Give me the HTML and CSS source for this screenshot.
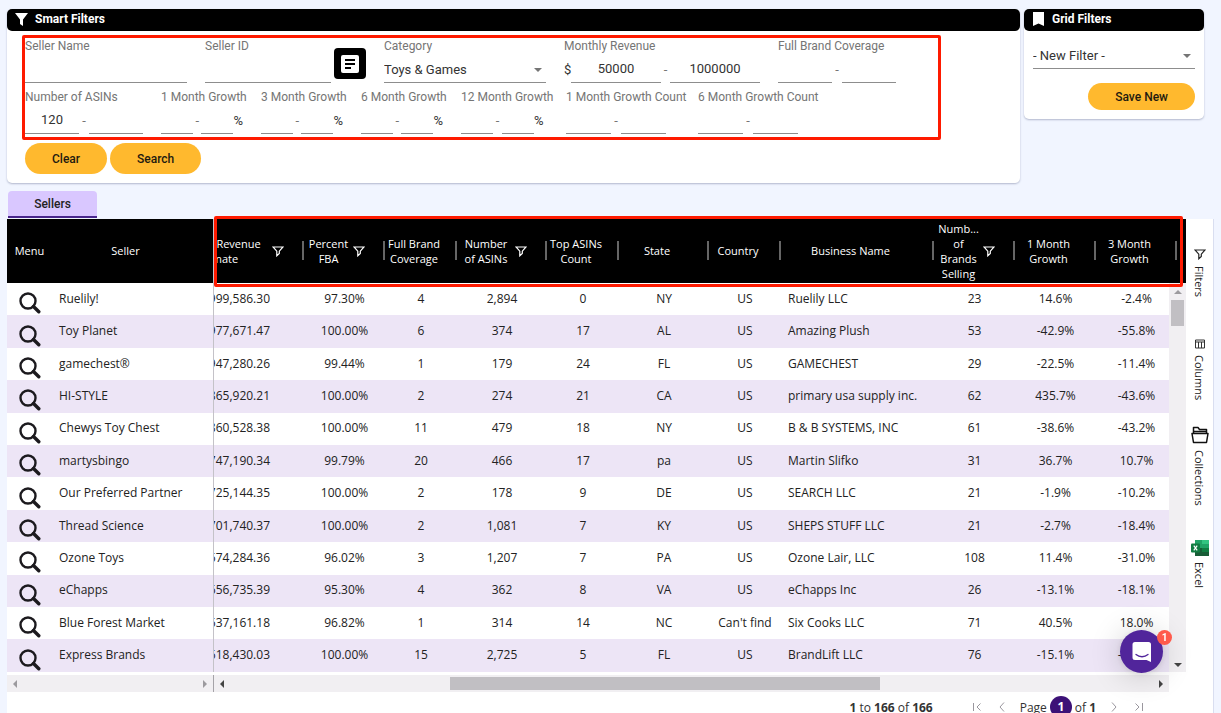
FILE: index.html
```html
<!DOCTYPE html>
<html lang="en">
<head>
    <meta charset="UTF-8">
    <meta name="viewport" content="width=device-width, initial-scale=1.0">
    <title>Sellers</title>
    <link rel="stylesheet" href="styles.css">
</head>
<body>
    <svg class="defs" aria-hidden="true">
        <symbol id="search" viewBox="0 0 22 22"><circle cx="9" cy="9" r="7.5" fill="none" stroke="#1c1a1e" stroke-width="2.4"/><path d="M14.500 14.500l5.300 5.300" stroke="#1c1a1e" stroke-width="3.400" stroke-linecap="round"/></symbol>
        <symbol id="funnel" viewBox="0 0 12 12"><path d="M1 2h10L7.300 6.200v2.300L4.800 10.800V6.200z" fill="none" stroke="currentColor" stroke-width="1.200"/></symbol>
    </svg>

    <div class="top">
        <section class="panel smart">
            <h2>
                <svg width="13" height="13" viewBox="0 0 13 13"><path d="M0 0h13L8 6.500V13L5 11V6.500z" fill="#fff"/></svg>
                Smart Filters
            </h2>
            <form id="smartForm">
                <div class="fields">
                    <div class="field-row">
                        <div class="field">
                            <label for="sellerName">Seller Name</label>
                            <div class="inputs"><input class="w-full" type="text" id="sellerName"></div>
                        </div>
                        <div class="with-button">
                            <div class="field">
                                <label for="sellerId">Seller ID</label>
                                <div class="inputs"><input class="w-id" type="text" id="sellerId"></div>
                            </div>
                            <button type="button" class="list-btn" aria-label="Seller list">
                                <svg width="18" height="18" viewBox="0 0 18 18"><rect width="18" height="18" rx="2" fill="#fff"/><path d="M4 5h10M4 9h10M4 13h6" stroke="#000" stroke-width="2"/></svg>
                            </button>
                        </div>
                        <div class="field">
                            <label for="category">Category</label>
                            <div class="inputs select w-full">
                                <select id="category"><option>Toys &amp; Games</option></select>
                            </div>
                        </div>
                        <div class="field revenue">
                            <label for="revMin">Monthly Revenue</label>
                            <div class="inputs">
                                <span class="dollar">$</span><input class="w-rev" type="text" id="revMin" value="50000"><span class="dash">-</span><input class="w-rev" type="text" aria-label="Maximum monthly revenue" value="1000000">
                            </div>
                        </div>
                        <div class="field">
                            <label for="coverMin">Full Brand Coverage</label>
                            <div class="inputs"><input class="w-num" type="text" id="coverMin"><span class="dash">-</span><input class="w-num" type="text" aria-label="Maximum coverage"></div>
                        </div>
                    </div>
                    <div class="field-row">
                        <div class="field">
                            <label for="asinMin">Number of ASINs</label>
                            <div class="inputs"><input class="w-num" type="text" id="asinMin" value="120"><span class="dash">-</span><input class="w-num" type="text" aria-label="Maximum ASINs"></div>
                        </div>
                        <div class="field growth">
                            <label for="g1">1 Month Growth</label>
                            <div class="inputs"><input class="w-pct" type="text" id="g1"><span class="dash">-</span><input class="w-pct" type="text" aria-label="Maximum 1 month growth"><span>%</span></div>
                        </div>
                        <div class="field growth">
                            <label for="g3">3 Month Growth</label>
                            <div class="inputs"><input class="w-pct" type="text" id="g3"><span class="dash">-</span><input class="w-pct" type="text" aria-label="Maximum 3 month growth"><span>%</span></div>
                        </div>
                        <div class="field growth">
                            <label for="g6">6 Month Growth</label>
                            <div class="inputs"><input class="w-pct" type="text" id="g6"><span class="dash">-</span><input class="w-pct" type="text" aria-label="Maximum 6 month growth"><span>%</span></div>
                        </div>
                        <div class="field growth-wide">
                            <label for="g12">12 Month Growth</label>
                            <div class="inputs"><input class="w-pct" type="text" id="g12"><span class="dash">-</span><input class="w-pct" type="text" aria-label="Maximum 12 month growth"><span>%</span></div>
                        </div>
                        <div class="field count">
                            <label for="c1">1 Month Growth Count</label>
                            <div class="inputs"><input class="w-count" type="text" id="c1"><span class="dash">-</span><input class="w-count" type="text" aria-label="Maximum 1 month growth count"></div>
                        </div>
                        <div class="field count">
                            <label for="c6">6 Month Growth Count</label>
                            <div class="inputs"><input class="w-count" type="text" id="c6"><span class="dash">-</span><input class="w-count" type="text" aria-label="Maximum 6 month growth count"></div>
                        </div>
                    </div>
                </div>
                <div class="actions">
                    <button type="reset" class="btn">Clear</button>
                    <button type="button" class="btn">Search</button>
                </div>
            </form>
        </section>

        <section class="panel saved">
            <h2>
                <svg width="13" height="14" viewBox="0 0 13 14"><path d="M1 0h11v14l-5.500-2.500L1 14z" fill="#fff"/></svg>
                Grid Filters
            </h2>
            <div class="saved-body">
                <div class="select">
                    <select aria-label="Saved filter"><option>- New Filter -</option></select>
                </div>
                <button type="button" class="btn save">Save New</button>
            </div>
        </section>
    </div>

    <button type="button" class="tab">Sellers</button>

    <div class="grid">
        <div class="grid-main">
            <div class="tables">
                <table class="pinned">
                    <colgroup><col class="c-menu"><col></colgroup>
                    <thead>
                        <tr><th>Menu</th><th class="th-seller">Seller</th></tr>
                    </thead>
                    <tbody>
                        <tr><td><svg><use href="#search"/></svg></td><td>Ruelily!</td></tr>
                        <tr><td><svg><use href="#search"/></svg></td><td>Toy Planet</td></tr>
                        <tr><td><svg><use href="#search"/></svg></td><td>gamechest®</td></tr>
                        <tr><td><svg><use href="#search"/></svg></td><td>HI-STYLE</td></tr>
                        <tr><td><svg><use href="#search"/></svg></td><td>Chewys Toy Chest</td></tr>
                        <tr><td><svg><use href="#search"/></svg></td><td>martysbingo</td></tr>
                        <tr><td><svg><use href="#search"/></svg></td><td>Our Preferred Partner</td></tr>
                        <tr><td><svg><use href="#search"/></svg></td><td>Thread Science</td></tr>
                        <tr><td><svg><use href="#search"/></svg></td><td>Ozone Toys</td></tr>
                        <tr><td><svg><use href="#search"/></svg></td><td>eChapps</td></tr>
                        <tr><td><svg><use href="#search"/></svg></td><td>Blue Forest Market</td></tr>
                        <tr><td><svg><use href="#search"/></svg></td><td>Express Brands</td></tr>
                    </tbody>
                </table>
                <div class="viewport">
                    <table class="center">
                        <colgroup>
                            <col class="c144"><col class="c81"><col class="c72"><col class="c90"><col class="c72"><col class="c90"><col class="c72"><col class="c153"><col class="c81"><col class="c81"><col class="c81">
                        </colgroup>
                        <thead>
                            <tr>
                                <th><div class="head filtered"><span>Monthly Revenue<br>Estimate</span><svg><use href="#funnel"/></svg></div></th>
                                <th><div class="head filtered"><span>Percent<br>FBA</span><svg><use href="#funnel"/></svg></div></th>
                                <th><div class="head"><span>Full Brand<br>Coverage</span></div></th>
                                <th><div class="head filtered"><span>Number<br>of ASINs</span><svg><use href="#funnel"/></svg></div></th>
                                <th><div class="head"><span>Top ASINs<br>Count</span></div></th>
                                <th><div class="head"><span>State</span></div></th>
                                <th><div class="head"><span>Country</span></div></th>
                                <th><div class="head"><span>Business Name</span></div></th>
                                <th><div class="head filtered"><span>Numb...<br>of<br>Brands<br>Selling</span><svg><use href="#funnel"/></svg></div></th>
                                <th><div class="head"><span>1 Month<br>Growth</span></div></th>
                                <th><div class="head"><span>3 Month<br>Growth</span></div></th>
                            </tr>
                        </thead>
                        <tbody>
                            <tr><td>$999,586.30</td><td>97.30%</td><td>4</td><td>2,894</td><td>0</td><td>NY</td><td>US</td><td>Ruelily LLC</td><td>23</td><td>14.6%</td><td>-2.4%</td></tr>
                            <tr><td>$977,671.47</td><td>100.00%</td><td>6</td><td>374</td><td>17</td><td>AL</td><td>US</td><td>Amazing Plush</td><td>53</td><td>-42.9%</td><td>-55.8%</td></tr>
                            <tr><td>$947,280.26</td><td>99.44%</td><td>1</td><td>179</td><td>24</td><td>FL</td><td>US</td><td>GAMECHEST</td><td>29</td><td>-22.5%</td><td>-11.4%</td></tr>
                            <tr><td>$865,920.21</td><td>100.00%</td><td>2</td><td>274</td><td>21</td><td>CA</td><td>US</td><td>primary usa supply inc.</td><td>62</td><td>435.7%</td><td>-43.6%</td></tr>
                            <tr><td>$860,528.38</td><td>100.00%</td><td>11</td><td>479</td><td>18</td><td>NY</td><td>US</td><td>B &amp; B SYSTEMS, INC</td><td>61</td><td>-38.6%</td><td>-43.2%</td></tr>
                            <tr><td>$747,190.34</td><td>99.79%</td><td>20</td><td>466</td><td>17</td><td>pa</td><td>US</td><td>Martin Slifko</td><td>31</td><td>36.7%</td><td>10.7%</td></tr>
                            <tr><td>$725,144.35</td><td>100.00%</td><td>2</td><td>178</td><td>9</td><td>DE</td><td>US</td><td>SEARCH LLC</td><td>21</td><td>-1.9%</td><td>-10.2%</td></tr>
                            <tr><td>$701,740.37</td><td>100.00%</td><td>2</td><td>1,081</td><td>7</td><td>KY</td><td>US</td><td>SHEPS STUFF LLC</td><td>21</td><td>-2.7%</td><td>-18.4%</td></tr>
                            <tr><td>$674,284.36</td><td>96.02%</td><td>3</td><td>1,207</td><td>7</td><td>PA</td><td>US</td><td>Ozone Lair, LLC</td><td>108</td><td>11.4%</td><td>-31.0%</td></tr>
                            <tr><td>$656,735.39</td><td>95.30%</td><td>4</td><td>362</td><td>8</td><td>VA</td><td>US</td><td>eChapps Inc</td><td>26</td><td>-13.1%</td><td>-18.1%</td></tr>
                            <tr><td>$637,161.18</td><td>96.82%</td><td>1</td><td>314</td><td>14</td><td>NC</td><td>Can't find</td><td>Six Cooks LLC</td><td>71</td><td>40.5%</td><td>18.0%</td></tr>
                            <tr><td>$618,430.03</td><td>100.00%</td><td>15</td><td>2,725</td><td>5</td><td>FL</td><td>US</td><td>BrandLift LLC</td><td>76</td><td>-15.1%</td><td>-14.2%</td></tr>
                        </tbody>
                    </table>
                    <div class="vscroll"><i class="arrow up"></i><i class="vthumb"></i><i class="arrow down"></i></div>
                </div>
                <div class="highlight"></div>
            </div>
            <div class="hscroll">
                <div class="track left"><i class="arrow prev"></i><i class="arrow next"></i></div>
                <div class="track right"><i class="arrow prev"></i><span class="rail"><i class="hthumb"></i></span><i class="arrow next"></i></div>
            </div>
            <div class="paging">
                <span class="summary"><b>1</b> to <b>166</b> of <b>166</b></span>
                <button type="button" aria-label="First page"><svg width="10" height="10" viewBox="0 0 10 10"><path d="M1.500 1v8M8.500 1.500L5 5l3.500 3.500"/></svg></button>
                <button type="button" aria-label="Previous page"><svg width="10" height="10" viewBox="0 0 10 10"><path d="M7 .5L3 5l4 4.500"/></svg></button>
                <span class="page">Page <b class="current">1</b> of <b>1</b></span>
                <button type="button" aria-label="Next page"><svg width="10" height="10" viewBox="0 0 10 10"><path d="M3 .5L7 5 3 9.500"/></svg></button>
                <button type="button" aria-label="Last page"><svg width="10" height="10" viewBox="0 0 10 10"><path d="M8.500 1v8M1.500 1.500L5 5 1.500 8.500"/></svg></button>
            </div>
        </div>

        <aside class="sidebar">
            <button type="button" class="s-filters"><svg width="12" height="12"><use href="#funnel"/></svg>Filters</button>
            <button type="button" class="s-columns"><svg width="10" height="10" viewBox="0 0 10 10"><path d="M.5 1h9v8h-9zM.5 3h9M3.500 3v6M6.500 3v6" fill="none" stroke="#333"/></svg>Columns</button>
            <button type="button" class="s-collections"><svg width="18" height="18" viewBox="0 0 18 18"><path d="M2.500 7V1.500h4.500l1.500 2h7V7M3 5.500h12M1 7.500h16l-1.500 9h-13z" fill="none" stroke="#111" stroke-width="1.500" stroke-linejoin="round"/></svg>Collections</button>
            <button type="button" class="s-excel"><svg width="18" height="16" viewBox="0 0 18 16"><path d="M4 0h7v8H4z" fill="#21a366"/><path d="M11 0h7v4h-7z" fill="#33c481"/><path d="M11 4h7v4h-7z" fill="#21a366"/><path d="M4 8h7v8H4z" fill="#185c37"/><path d="M11 8h7v4h-7z" fill="#107c41"/><path d="M11 12h7v4h-7z" fill="#185c37"/><rect y="3.500" width="9" height="9" rx="1" fill="#107c41"/><path d="M2.800 5.700l3.400 4.600M6.200 5.700L2.800 10.300" stroke="#fff" stroke-width="1.200"/></svg>Excel</button>
        </aside>
    </div>

    <button type="button" class="chat" aria-label="Open chat">
        <svg width="20" height="22" viewBox="0 0 20 22"><path d="M3 1h13.500a2.500 2.500 0 0 1 2.500 2.500V21l-4.500-2H3a2.500 2.500 0 0 1-2.500-2.500v-13A2.500 2.500 0 0 1 3 1z" fill="#fff"/><path d="M4 13.500c3.500 3 8.500 3 12 0" fill="none" stroke="#51259b" stroke-width="1.300" stroke-linecap="round"/></svg>
        <span class="badge">1</span>
    </button>
</body>
</html>
```
FILE: styles.css
```css
* {
    box-sizing: border-box;
}
html {
    height: 100%;
    overflow: hidden;
}
body {
    margin: 0;
    padding: 9px 7px 0 7px;
    background: #f1f5ff;
    font-family: Roboto, sans-serif;
    font-size: 12px;
    color: #222;
}
button, input, select {
    font: inherit;
    color: inherit;
}
button {
    border: none;
    padding: 0;
    background: none;
    cursor: pointer;
}
.defs {
    position: absolute;
    width: 0;
    height: 0;
}

/* filter panels */
.top {
    display: flex;
    align-items: flex-start;
    gap: 4px;
    margin-right: 10px;
}
.panel {
    background: #fff;
    border-radius: 5px;
    box-shadow: 0 1px 2px rgba(60, 70, 110, 0.35);
}
.panel h2 {
    display: flex;
    align-items: center;
    gap: 7px;
    height: 22px;
    margin: 0;
    padding: 0 8px 2px;
    border-radius: 5px;
    background: #000;
    color: #fff;
    font-size: 12px;
    font-weight: 700;
}
.smart {
    flex: 1;
}
.saved {
    width: 180px;
}
.fields {
    margin: 4px 79px 0 15px;
    border: 3px solid #fe1a00;
    border-radius: 2px;
    height: 105px;
}
.field-row {
    display: flex;
    gap: 18px;
    height: 51px;
}
.field label {
    display: block;
    height: 18px;
    line-height: 16px;
    color: #757575;
    white-space: nowrap;
}
.inputs {
    display: flex;
    height: 27px;
    line-height: 28px;
    font-size: 13px;
    color: #333;
}
.field input, .select select {
    flex: none;
    height: 27px;
    padding: 0;
    border: none;
    border-bottom: 1px solid #8d8d8d;
    border-radius: 0;
    outline: none;
    background: none;
    text-align: center;
}
.w-full {
    width: 162px;
}
.w-id {
    width: 126px;
}
.w-rev {
    width: 90px;
}
.w-num {
    width: 54px;
}
.w-pct {
    width: 32px;
}
.w-count {
    width: 45px;
}
.growth {
    width: 82px;
}
.growth-wide {
    width: 87px;
}
.count {
    width: 114px;
}
.dollar {
    width: 7px;
}
.dash {
    width: 10px;
    text-align: center;
    color: #757575;
}
.growth .dash, .growth-wide .dash, .revenue .dash {
    width: 9px;
}
.with-button {
    display: flex;
    gap: 3px;
}
.list-btn {
    display: flex;
    align-items: center;
    justify-content: center;
    width: 32px;
    height: 31px;
    margin-top: 10px;
    border-radius: 4px;
    background: #000;
}
.select {
    position: relative;
    font-size: 13px;
    color: #333;
}
.select select {
    width: 100%;
    appearance: none;
    text-align: left;
}
.select::after {
    content: "";
    position: absolute;
    right: 4px;
    top: 12px;
    border: 4px solid transparent;
    border-top-color: #757575;
    border-bottom: none;
}
.actions {
    display: flex;
    gap: 3px;
    padding: 3px 18px 9px;
}
.btn {
    height: 31px;
    padding: 0 27px;
    border-radius: 16px;
    background: #ffb92e;
    color: #1f1b10;
    font-weight: 500;
}
.saved-body {
    padding: 11px 9px 9px;
    text-align: right;
}
.save {
    height: 27px;
    margin-top: 14px;
}

/* seller grid */
.tab {
    display: block;
    width: 89px;
    height: 27px;
    margin: 8px 0 1px 1px;
    border-bottom: 2px solid #48258c;
    border-radius: 4px 4px 0 0;
    background: #d9c7ff;
    font-weight: 500;
}
.grid {
    display: flex;
    background: #fff;
    border-right: 1px solid #d9def0;
    font-family: "Open Sans", "Noto Sans", sans-serif;
}
.grid-main {
    flex: 1;
    min-width: 0;
}
.tables {
    display: flex;
    position: relative;
}
table {
    height: 453px;
    border-spacing: 0;
    table-layout: fixed;
}
thead tr {
    height: 64px;
}
th {
    padding: 0 0 1px;
    background: #000;
    color: #fff;
    font-size: 11px;
    font-weight: 400;
    line-height: 15px;
}
td {
    padding: 0 0 2px;
    text-align: center;
    white-space: nowrap;
}
tbody tr:nth-child(even) {
    background: #ede5f6;
}
.pinned {
    width: 207px;
    border-right: 1px solid #c4c2c8;
}
.pinned td {
    padding-left: 7px;
    text-align: left;
}
.pinned td:first-child {
    padding: 8px 0 0 12px;
}
.pinned td svg {
    display: block;
    width: 22px;
    height: 22px;
}
.pinned .th-seller {
    padding-right: 14px;
}
.viewport {
    flex: 1;
    min-width: 0;
    overflow: hidden;
    position: relative;
    background: linear-gradient(#000 64px, #fff 64px);
}
.center {
    width: 1017px;
    margin-left: -54px;
}
.c-menu {
    width: 45px;
}
.c72 {
    width: 72px;
}
.c81 {
    width: 81px;
}
.c90 {
    width: 90px;
}
.c144 {
    width: 144px;
}
.c153 {
    width: 153px;
}
.center td:first-child {
    padding-right: 34px;
    text-align: right;
}
.center td:nth-child(8) {
    padding-left: 7px;
    text-align: left;
}
.head {
    display: flex;
    align-items: center;
    height: 63px;
    padding-right: 14px;
    background: linear-gradient(#666, #666) right center / 2px 19px no-repeat;
}
.head span {
    flex: 1;
    white-space: nowrap;
}
.filtered {
    padding-right: 20px;
}
.filtered svg {
    flex: none;
    width: 12px;
    height: 12px;
}
.vscroll {
    display: flex;
    flex-direction: column;
    align-items: center;
    position: absolute;
    top: 64px;
    right: 0;
    bottom: 0;
    width: 17px;
    padding: 7px 0 5px;
    background: #f1eff2;
}
.vthumb {
    width: 13px;
    height: 26px;
    margin: 6px 0 auto;
    background: #c1bfc3;
}
.highlight {
    position: absolute;
    top: -3px;
    right: 3px;
    bottom: 385px;
    left: 207px;
    border: 3px solid #fe1a00;
    border-radius: 2px;
}
.hscroll {
    display: flex;
    padding: 3px 17px 0 0;
}
.track {
    display: flex;
    align-items: center;
    justify-content: space-between;
    height: 17px;
    padding: 0 6px;
    background: #f1eff2;
}
.left {
    width: 207px;
    border-right: 1px solid #a5a3a8;
}
.right {
    flex: 1;
}
.rail {
    flex: 1;
    padding: 0 4px 0 24%;
}
.hthumb {
    display: block;
    width: 61%;
    height: 13px;
    background: #c1bfc3;
}
.arrow {
    border: 4px solid transparent;
}
.up {
    border-top: none;
    border-bottom-color: #9c9a9e;
}
.down {
    border-bottom: none;
    border-top-color: #444;
}
.prev {
    border-left: none;
    border-right-color: #444;
}
.next {
    border-right: none;
    border-left-color: #444;
}
.left .prev {
    border-right-color: #9c9a9e;
}
.left .next {
    border-left-color: #9c9a9e;
}
.paging {
    display: flex;
    align-items: center;
    justify-content: flex-end;
    gap: 15px;
    height: 30px;
    padding-right: 42px;
    color: #333;
}
.summary {
    margin-right: 24px;
}
.paging button {
    display: flex;
}
.paging path {
    fill: none;
    stroke: #9a979e;
}
.page {
    display: flex;
    align-items: center;
    gap: 3px;
    margin: 0 -2px;
}
.current {
    width: 22px;
    height: 22px;
    border-radius: 50%;
    background: #3c1177;
    color: #fff;
    line-height: 22px;
    text-align: center;
}
.sidebar {
    width: 27px;
    padding-top: 29px;
}
.sidebar button {
    display: flex;
    align-items: center;
    gap: 6px;
    width: 27px;
    writing-mode: vertical-rl;
    font-size: 11px;
}
.s-filters {
    height: 91px;
}
.s-columns {
    height: 87px;
}
.s-collections {
    height: 114px;
}

/* chat launcher */
.chat {
    display: flex;
    align-items: center;
    justify-content: center;
    position: fixed;
    right: 58px;
    bottom: 40px;
    width: 43px;
    height: 43px;
    border-radius: 50%;
    background: #51259b;
    box-shadow: 0 1px 6px rgba(0, 0, 0, 0.1), 0 2px 32px rgba(0, 0, 0, 0.2);
}
.badge {
    position: absolute;
    top: 0;
    right: -9px;
    width: 15px;
    height: 15px;
    border-radius: 50%;
    background: #ff5a4c;
    color: #fff;
    font-size: 10px;
    font-weight: 700;
    line-height: 15px;
}
```
